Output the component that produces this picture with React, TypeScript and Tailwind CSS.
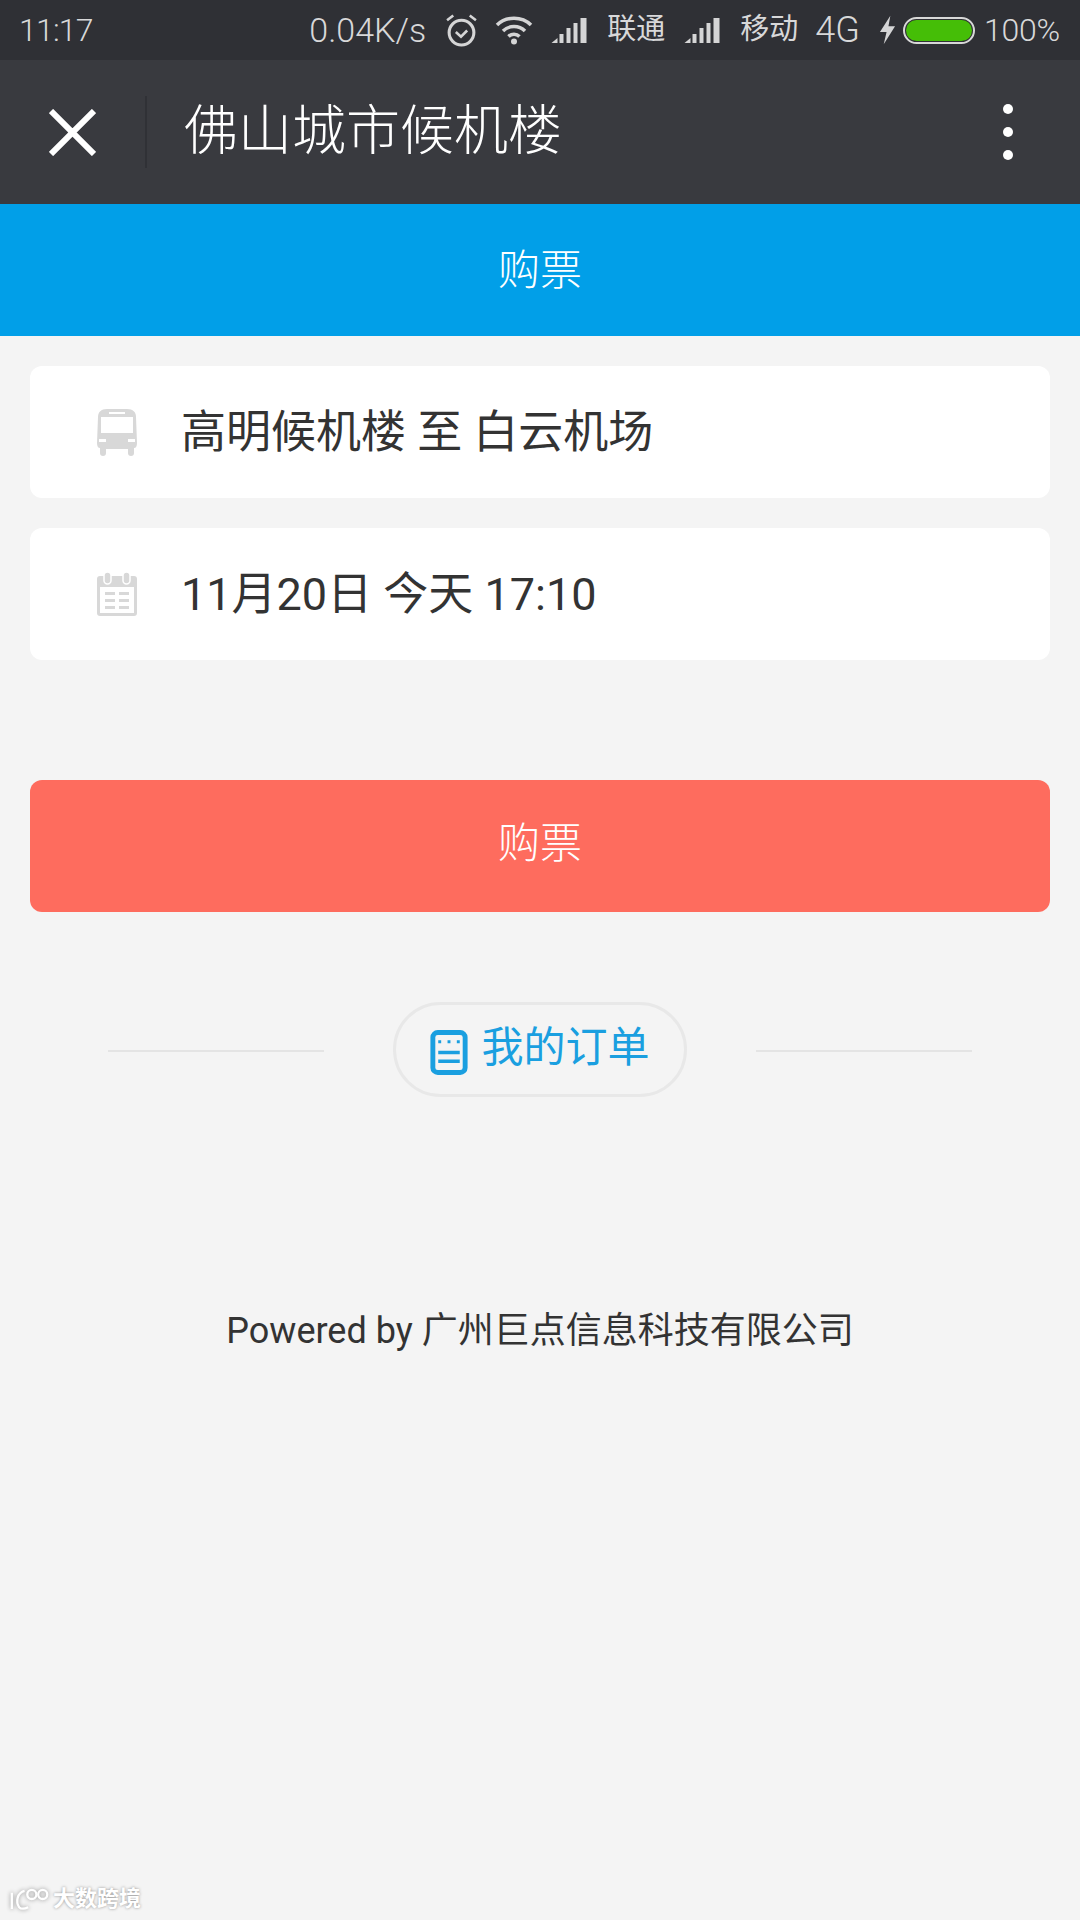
const font = "font-['Roboto','Noto_Sans_CJK_SC',sans-serif]"

function SignalIcon() {
  return (
    <svg width="37" height="26" viewBox="0 0 36 26" fill="#d5d5d6">
      <path d="M0 26 L6 21 V26 Z" />
      <rect x="8" y="17" width="4" height="9" />
      <rect x="15" y="11" width="4" height="15" />
      <rect x="22" y="6" width="4" height="20" />
      <rect x="29" y="1" width="6" height="25" />
    </svg>
  )
}

function StatusBar() {
  return (
    <div className="flex h-[60px] items-center bg-[#2f3035] pl-[19px] pr-[20px] text-[32px] font-light text-[#d8d8d9]">
      <span className="tracking-[-0.8px]">11:17</span>
      <span className="ml-auto text-[34px]">0.04K/s</span>
      <svg className="ml-[19px]" width="33" height="33" viewBox="0 0 32 32" fill="none" stroke="#d5d5d6" strokeWidth="3">
        <circle cx="16" cy="18" r="12" />
        <path d="M10.5 17.5 L15.5 22 L21.5 16" strokeWidth="2.5" />
        <path d="M2 6 L8 1.5 M30 6 L24 1.5" strokeWidth="2.5" />
      </svg>
      <svg className="ml-[17px]" width="38" height="30" viewBox="0 0 38 30" fill="none" stroke="#d5d5d6" strokeWidth="3.5">
        <path d="M2 10 C11 1 27 1 36 10" />
        <path d="M8 16 C14 10 24 10 30 16" />
        <path d="M13.5 21.5 C16.5 18.5 21.5 18.5 24.5 21.5" />
        <circle cx="19" cy="26.5" r="3" fill="#d5d5d6" stroke="none" />
      </svg>
      <span className="ml-[18px] flex"><SignalIcon /></span>
      <span className="ml-[19px] text-[29px] font-normal">联通</span>
      <span className="ml-[19px] flex"><SignalIcon /></span>
      <span className="ml-[19px] text-[29px] font-normal">移动</span>
      <span className="ml-[17px] text-[36px]">4G</span>
      <svg className="ml-[19px]" width="17" height="30" viewBox="0 0 18 30" fill="#d5d5d6">
        <path d="M12 0 L1 17 H8 L5 30 L17 11 H10 Z" />
      </svg>
      <div className="ml-[7px] h-[27px] w-[72px] rounded-full border-2 border-[#d8d8d8] bg-[#2f3035] p-[1px]">
        <div className="h-full w-full rounded-full bg-[#45be07]" />
      </div>
      <span className="ml-[9px] tracking-[-0.2px]">100%</span>
    </div>
  )
}

function NavBar() {
  return (
    <div className="flex h-[144px] items-center bg-[#393a3f]">
      <svg className="ml-[49px]" width="47" height="47" viewBox="0 0 47 47" stroke="#ffffff" strokeWidth="6">
        <path d="M2 2 L45 45 M45 2 L2 45" />
      </svg>
      <div className="ml-[49px] h-[72px] w-[2px] bg-[#303136]" />
      <span className="ml-[37px] text-[54px] font-light leading-none text-white">佛山城市候机楼</span>
      <div className="ml-auto mr-[67px] flex flex-col gap-[13px]">
        <div className="h-[10px] w-[10px] rounded-full bg-white" />
        <div className="h-[10px] w-[10px] rounded-full bg-white" />
        <div className="h-[10px] w-[10px] rounded-full bg-white" />
      </div>
    </div>
  )
}

function BusIcon() {
  return (
    <svg width="40" height="47" viewBox="0 0 40 47" fill="#d8d8d8">
      <path
        fillRule="evenodd"
        d="M10 0 H30 C36 0 39 3 39 8 L40 34 C40 37 39 39 37 39 V44 C37 46 36 47 34 47 C32 47 31 46 31 44 V40 H9 V44 C9 46 8 47 6 47 C4 47 3 46 3 44 V39 C1 39 0 37 0 34 L1 8 C1 3 4 0 10 0 Z M4 8 V24 H36 V8 Z M12 3 V5 H28 V3 Z M2 30 V33 H9 V30 Z M31 30 V33 H38 V30 Z"
      />
    </svg>
  )
}

function CalendarIcon() {
  return (
    <svg width="40" height="44" viewBox="0 0 40 44" fill="#d8d8d8">
      <path
        fillRule="evenodd"
        d="M3 4 H37 C39 4 40 5 40 7 V41 C40 43 39 44 37 44 H3 C1 44 0 43 0 41 V7 C0 5 1 4 3 4 Z M3 15 V41 H37 V15 Z"
      />
      <rect x="7" y="0" width="7" height="12" rx="3.5" stroke="#ffffff" strokeWidth="1.5" />
      <rect x="26" y="0" width="7" height="12" rx="3.5" stroke="#ffffff" strokeWidth="1.5" />
      <path d="M8 20 H18 V23 H8 Z M22 20 H32 V23 H22 Z M8 27 H18 V30 H8 Z M22 27 H32 V30 H22 Z M8 34 H18 V37 H8 Z M22 34 H32 V37 H22 Z" />
    </svg>
  )
}

function OrderIcon() {
  return (
    <svg className="mt-[6px]" width="38" height="45" viewBox="0 0 38 46" fill="none" stroke="#1a9fe0">
      <rect x="2.5" y="2.5" width="33" height="41" rx="5" strokeWidth="5" />
      <path d="M8 12 H11 M17.5 12 H20.5 M27 12 H30" strokeWidth="3" />
      <path d="M8 23 H30 M8 32 H30" strokeWidth="3.5" />
    </svg>
  )
}

function InfoCard({ icon, text }: { icon: React.ReactNode; text: string }) {
  return (
    <div className="flex h-[132px] items-center rounded-[12px] bg-white">
      <div className="flex w-[151px] shrink-0 justify-center pl-[22px]">{icon}</div>
      <span className="text-[45px] leading-none text-[#333333]">{text}</span>
    </div>
  )
}

export default function App() {
  return (
    <div className={`${font} relative flex h-[1920px] w-[1080px] flex-col overflow-hidden bg-[#f4f4f4]`}>
      <StatusBar />
      <NavBar />

      <div className="flex h-[132px] items-center justify-center bg-[#019fe8] text-[42px] font-light text-white">
        购票
      </div>

      <div className="flex flex-col gap-[30px] px-[30px] pt-[30px]">
        <InfoCard icon={<BusIcon />} text="高明候机楼 至 白云机场" />
        <InfoCard icon={<CalendarIcon />} text="11月20日 今天 17:10" />
      </div>

      <div className="mx-[30px] mt-[120px] flex h-[132px] items-center justify-center rounded-[12px] bg-[#fe6c5e] pb-[6px] text-[42px] font-light text-white">
        购票
      </div>

      <div className="mt-[90px] flex items-center justify-center">
        <div className="mt-[2px] h-[2px] w-[216px] bg-[#e4e4e4]" />
        <div className="mx-[69px] flex h-[95px] w-[294px] items-center justify-center gap-[13px] rounded-full border-[3px] border-[#e8e8e8] text-[42px] text-[#1a9fe0]">
          <OrderIcon />
          <span className="pb-[4px] leading-none">我的订单</span>
        </div>
        <div className="mt-[2px] h-[2px] w-[216px] bg-[#e4e4e4]" />
      </div>

      <p className="mt-[216px] text-center text-[36px] leading-none text-[#333333]">
        Powered by 广州巨点信息科技有限公司
      </p>

      {/* image-host stamp in the bottom corner */}
      <div className="absolute bottom-[8px] left-[10px] flex items-center gap-[3px] text-[22px] font-bold leading-none text-white [text-shadow:0_0_3px_#8f8f8f]">
        <svg width="40" height="26" viewBox="0 0 44 26" fill="none" stroke="#ffffff" strokeWidth="2.5" className="drop-shadow-[0_0_2px_#8f8f8f]">
          <path d="M2 6 V24 M16 4 C8 6 6 16 10 22 C12 24 16 24 20 22" />
          <circle cx="24" cy="8" r="5" />
          <circle cx="36" cy="8" r="5" />
        </svg>
        <span>大数跨境</span>
      </div>
    </div>
  )
}
